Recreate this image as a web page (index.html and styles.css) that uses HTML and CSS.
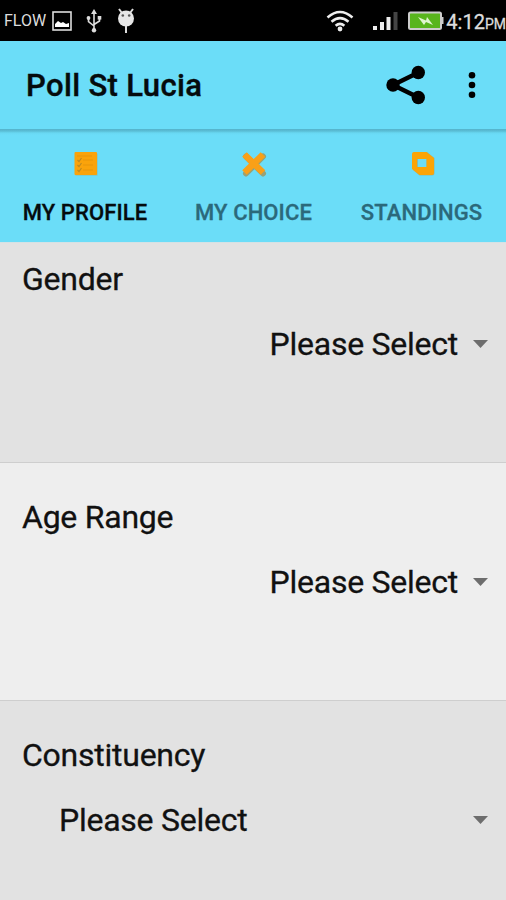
FILE: index.html
```html
<!DOCTYPE html>
<html lang="en">
<head>
<meta charset="utf-8">
<title>Poll St Lucia</title>
<link rel="stylesheet" href="styles.css">
</head>
<body>
<header class="status">
  <span class="carrier">FLOW</span>
  <svg class="picture" width="20" height="20" viewBox="0 0 20 20"><rect x="1" y="1" width="18" height="18" fill="none" stroke="#ddd" stroke-width="1.6"/><path d="M3 16v-3l3-3 3 2 2-1 3 2 3-1v4z" fill="#fff"/></svg>
  <svg class="usb" width="16" height="24" viewBox="0 0 16 24" fill="none" stroke="#ddd" stroke-width="1.6"><path d="M8 3v18M2.500 9v3.500L8 17M13.500 9v3L8 15.500"/><path d="M8 0l3 5H5z" fill="#ddd" stroke="none"/><circle cx="8" cy="21.300" r="2.200" fill="#ddd" stroke="none"/><circle cx="2.500" cy="9" r="1.900" fill="#ddd" stroke="none"/><path d="M11.700 7h3.600v3.600h-3.600z" fill="#ddd" stroke="none"/></svg>
  <svg class="droid" width="18" height="26" viewBox="0 0 18 26"><path d="M5 5L2 1M13 5l3-4M9 17v8" stroke="#ddd" stroke-width="2"/><circle cx="9" cy="10.500" r="8" fill="#e6e6e6"/><circle cx="5.800" cy="7.500" r="1.300" fill="#555"/><circle cx="12.200" cy="7.500" r="1.300" fill="#555"/></svg>
  <svg class="wifi" width="28" height="22" viewBox="0 0 28 22" fill="none" stroke="#eee" stroke-width="2.500"><path d="M1.500 7.500q12.500-11 25 0M5.500 11.800q8.500-7.400 17 0M9.600 15.800q4.400-3.800 8.800 0"/><circle cx="14" cy="19" r="2.400" fill="#eee" stroke="none"/></svg>
  <svg class="signal" width="25" height="20" viewBox="0 0 25 20"><path d="M0 15h4v4H0zM7 11h4v8H7zM13.500 6h4v13h-4z" fill="#eee"/><path d="M20.500 1h4v18h-4z" fill="#444"/></svg>
  <svg class="battery" width="36" height="20" viewBox="0 0 36 20"><rect x="1" y="1.500" width="32" height="16.500" rx="1.500" fill="#58b51c" stroke="#ccc" stroke-width="2"/><path d="M33 6h2.500v7H33z" fill="#ccc"/><path d="M10 6l8 3.500 1-3.500 6 8-7-3-2 3z" fill="#dff5cf"/></svg>
  <span class="clock">4:12<small>PM</small></span>
</header>
<div class="appbar">
  <h1>Poll St Lucia</h1>
  <svg class="share" width="40" height="40" viewBox="0 0 40 40"><path d="M32.500 7.500L7 20l25.500 12.500" fill="none" stroke="#000" stroke-width="4.500"/><circle cx="32.300" cy="7.500" r="6.700"/><circle cx="7" cy="20" r="6.700"/><circle cx="32.300" cy="32.500" r="6.700"/></svg>
  <svg class="more" width="8" height="28" viewBox="0 0 8 28"><circle cx="4" cy="4.200" r="3.300"/><circle cx="4" cy="14" r="3.300"/><circle cx="4" cy="23.800" r="3.300"/></svg>
</div>
<nav class="tabs">
  <div class="tab active"><svg width="26" height="26" viewBox="0 0 26 26"><path d="M3.500 2.500h22v22h-22z" fill="#a1a574" opacity=".6"/><rect x="2.500" y="1" width="22.500" height="23" rx="1" fill="#faa30b"/><path d="M5 5h15M11 9h10M11 14h10M11 19h10" stroke="#e8960a" stroke-width="1.200"/><path d="M5.500 9l1.500 1.500L9.500 7M5.500 14l1.500 1.500L9.500 12M5.500 19l1.500 1.500L9.500 17" fill="none" stroke="#bd8a20" stroke-width="1.200"/></svg><span>MY PROFILE</span></div>
  <div class="tab"><svg width="26" height="26" viewBox="0 0 26 26" fill="none"><path d="M5 5.500l17 17M22 5.500l-17 17" stroke="#97a278" stroke-width="6" stroke-linecap="round"/><path d="M3.500 3.500l18.500 18M22 3.500l-18.500 18" stroke="#f9a018" stroke-width="6.500"/></svg><span>MY CHOICE</span></div>
  <div class="tab"><svg width="26" height="26" viewBox="0 0 26 26"><path fill-rule="evenodd" d="M5 1h13l7.500 6v15q0 2.500-2.500 2.500H10.500L4 19V3zm4 7v8h8.500V8z" fill="#9da679" opacity=".65"/><path fill-rule="evenodd" d="M5 1h12.500L25 7v15q0 2-2 2H10.500L3 18V3q0-2 2-2zm3 7v8h9.500V8z" fill="#fba407"/></svg><span>STANDINGS</span></div>
</nav>
<main>
  <section class="row first">
    <h2>Gender</h2>
    <div class="select"><span>Please Select</span><i class="caret"></i></div>
  </section>
  <section class="row light">
    <h2>Age Range</h2>
    <div class="select"><span>Please Select</span><i class="caret"></i></div>
  </section>
  <section class="row">
    <h2>Constituency</h2>
    <div class="select wide"><span>Please Select</span><i class="caret"></i></div>
  </section>
</main>
</body>
</html>
```
FILE: styles.css
```css
* { box-sizing: border-box; }
body { margin: 0; width: 506px; height: 900px; overflow: hidden; display: flex; flex-direction: column; font-family: Roboto, sans-serif; color: #111; background: #e2e2e2; }
svg { display: block; flex: none; }
h1, h2 { margin: 0; white-space: nowrap; }
.status { height: 41px; flex: none; background: #000; color: #ddd; display: flex; align-items: center; white-space: nowrap; }
.carrier { width: 49px; padding-left: 4px; font-size: 16px; }
.picture { margin-left: 4px; }
.usb { margin-left: 14px; }
.droid { margin-left: 15px; }
.wifi { margin-left: 191px; }
.signal { margin-left: 19px; }
.battery { margin-left: 10px; }
.clock { margin-left: 2px; padding-top: 2px; font-size: 20px; -webkit-text-stroke: 0.3px #ddd; }
.clock small { font-size: 14px; }
.appbar { height: 88px; flex: none; background: #6bddf8; display: flex; align-items: center; padding-left: 26px; }
h1 { width: 360px; padding-top: 2px; font-size: 31px; font-weight: 500; line-height: 40px; letter-spacing: 0.35px; color: #050b0d; -webkit-text-stroke: 0.4px #050b0d; }
.more { margin-left: 42px; }
.tabs { height: 113px; flex: none; display: grid; grid-template-columns: 170px 167px 169px; background: linear-gradient(#55b4cc 0, #5abdd5 2px, #68d8f2 4px, #6bddf8 6px); }
.tab { display: flex; flex-direction: column; align-items: center; padding-top: 22px; font-size: 22px; font-weight: 500; color: #2b697b; white-space: nowrap; letter-spacing: 0.1px; -webkit-text-stroke: 0.3px currentColor; }
.tab svg { -webkit-text-stroke: 0; }
.tab span { margin-top: 23px; line-height: 26px; }
.active { color: #050b0d; }
main { flex: 1; display: flex; flex-direction: column; }
.row { height: 238px; flex: none; padding: 35px 18px 0 22px; border-top: 1px solid #cecece; }
.first { height: 220px; padding-top: 17px; border-top: 1px solid #d5e2e5; }
.light { background: #eee; }
h2, .select { font-size: 32px; font-weight: 400; line-height: 38px; letter-spacing: -0.25px; -webkit-text-stroke: 0.3px #111; }
.select { display: flex; justify-content: flex-end; align-items: center; margin-top: 27px; white-space: nowrap; }
.wide { justify-content: space-between; padding-left: 37px; }
.caret { width: 15px; height: 8px; margin-left: 15px; background: #6d6d6d; clip-path: polygon(0 0, 100% 0, 50% 100%); }
```
